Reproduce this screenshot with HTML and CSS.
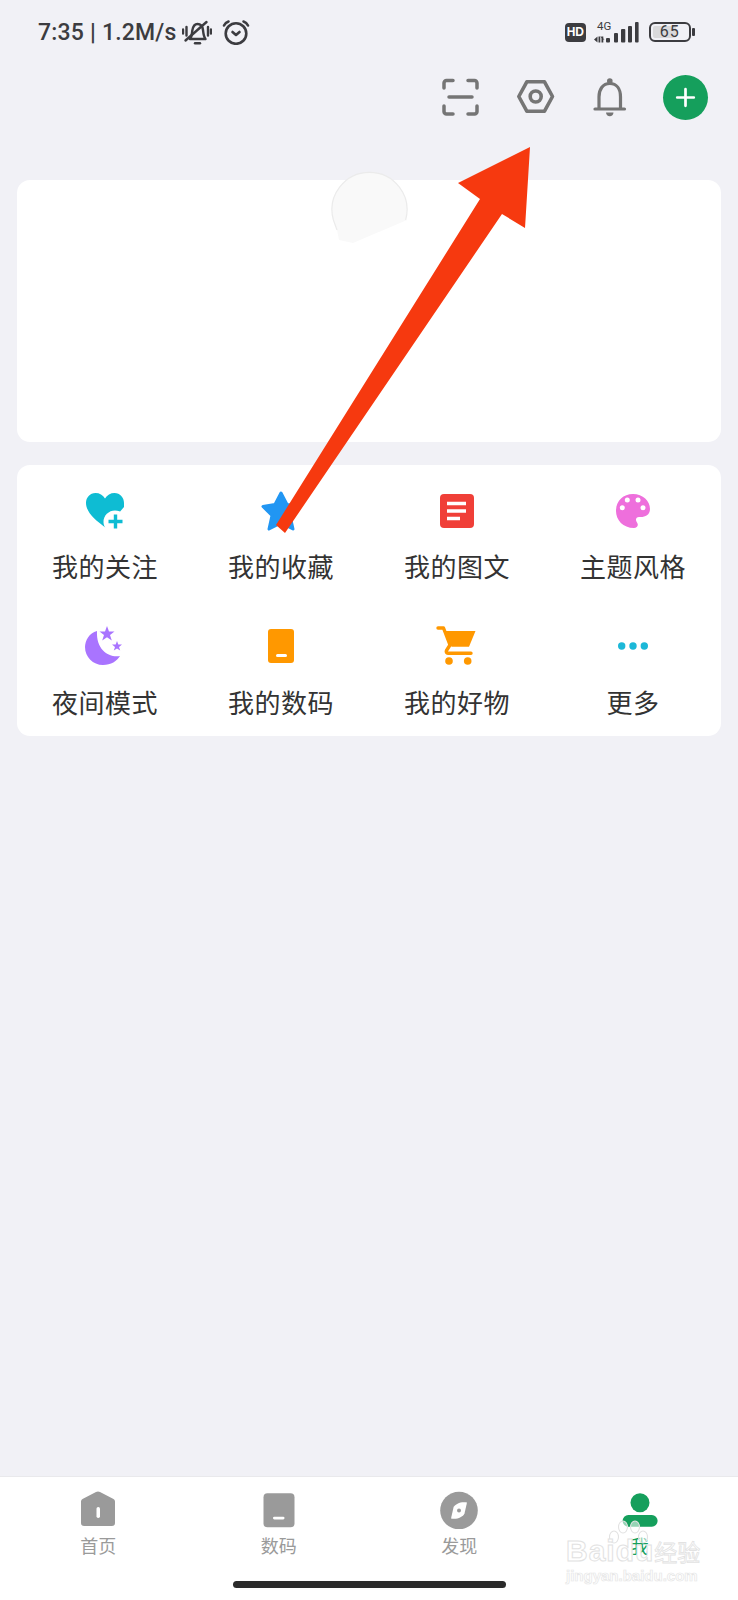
FILE: index.html
```html
<!DOCTYPE html>
<html lang="zh-CN">
<head>
<meta charset="utf-8">
<title>我的</title>
<link rel="stylesheet" href="styles.css">
</head>
<body>
<div class="page">
  <div class="status">
    <div class="status-left">
      <span class="status-text">7:35 <b class="bar">|</b> 1.2M/s</span>
      <svg class="ic-mute" viewBox="0 0 30 26"><g fill="none" stroke="#3c3c40" stroke-width="2.400" stroke-linecap="round" stroke-linejoin="round"><path d="M1 10.500v4M4.500 8v8.500M29 10.500v4M26 8v8.500"/><path d="M8 20c2-2 1.800-5 2.300-8.500C11 7.500 12.800 5 15.500 5c3 0 5 2.300 5.500 6 .4 3.500.5 6.500 2.500 9z"/><path d="M3.500 21.500L24.500 3"/><path d="M13 24.300h5"/></g></svg>
      <svg class="ic-alarm" viewBox="0 0 28 26"><g fill="none" stroke="#3c3c40" stroke-width="2.600" stroke-linecap="round" stroke-linejoin="round"><circle cx="14" cy="14.500" r="10.300"/><path d="M2 6.500c1-2 2.500-3.300 4.500-4M26 6.500c-1-2-2.500-3.300-4.500-4"/><path d="M10.500 13l3.500 3 3.500-3"/></g></svg>
    </div>
    <div class="status-right">
      <span class="hd">HD</span>
      <svg class="ic-signal" viewBox="0 0 46 24"><text x="3" y="9.500" class="net">4G</text><g fill="#3c3c40"><path d="M0 19.500l3.500-3v6zM4.500 16.500h1.800v6H4.500zM7.500 16.500h1.800v6H7.500zM6.500 16l4 3.500H8z"/><rect x="12" y="18" width="4" height="4.500" rx="1"/><rect x="20" y="13" width="4" height="9.500" rx="1"/><rect x="27" y="9" width="4.300" height="13.500" rx="1"/><rect x="34" y="6" width="4" height="16.500" rx="1"/><rect x="41" y="2" width="3.600" height="20.500" rx="1"/></g></svg>
      <div class="battery"><div class="battery-body"><span class="battery-fill"></span><span class="battery-num">65</span></div><span class="battery-nub"></span></div>
    </div>
  </div>

  <div class="actions">
    <svg class="act" viewBox="0 0 45 45"><g fill="none" stroke="#757575" stroke-width="3.500" stroke-linecap="round" stroke-linejoin="round"><path d="M6 13V8a2.500 2.500 0 0 1 2.500-2.500H15M30 5.500h6.500A2.500 2.500 0 0 1 39 8v5M39 31v5.500a2.500 2.500 0 0 1-2.500 2.500H30M15 39H8.500A2.500 2.500 0 0 1 6 36.500V31"/><path d="M11 22h23"/></g></svg>
    <svg class="act" viewBox="0 0 45 45"><g fill="none" stroke="#757575" stroke-width="3.600" stroke-linejoin="round"><path d="M5.800 21.500L13.800 6.800h17.700L39.500 21.500 31.500 36.200H13.800z"/><circle cx="22.700" cy="21.500" r="5.500"/></g></svg>
    <svg class="act" viewBox="0 0 45 45"><g fill="none" stroke="#757575" stroke-width="3.200" stroke-linecap="round"><path d="M11 33V22C11 14 15 8.500 21.800 8.500S32.500 14 32.500 22V33"/><path d="M7 34h29.500"/></g><circle cx="21.800" cy="6" r="2.800" fill="#757575"/><path d="M18 37.500h7.500c0 2.300-1.700 3.700-3.700 3.700S18 39.800 18 37.500z" fill="#757575"/></svg>
    <div class="add"><svg viewBox="0 0 45 45"><path d="M22.500 14.200v16.600M14.200 22.500h16.600" stroke="#fff" stroke-width="2.700" stroke-linecap="round"/></svg></div>
  </div>

  <div class="card profile"></div>

  <div class="card grid">
    <div class="item">
      <svg class="ico" viewBox="0 0 50 50"><path d="M25 13.500C23 10 19.500 8 15.500 8 10 8 6 12.500 6 18c0 9 9 17 20 25l18-21v-4c0-5.500-4-10-9.500-10-4 0-7.500 2-9.500 5.500z" fill="#0ebcd3"/><circle cx="35" cy="37" r="11.500" fill="#fff"/><path d="M35.500 29.500v14M28.500 36.500h14" stroke="#0ebcd3" stroke-width="3.400"/></svg>
      <span class="label">我的关注</span>
    </div>
    <div class="item">
      <svg class="ico" viewBox="0 0 50 50"><path d="M25 8l6 11.500 12 2-9 9 3 13.500-12-6-12 6 3-13.500-9-9 12-2z" fill="#2196f3" stroke="#2196f3" stroke-width="3" stroke-linejoin="round"/></svg>
      <span class="label">我的收藏</span>
    </div>
    <div class="item">
      <svg class="ico" viewBox="0 0 50 50"><rect x="8" y="9" width="34" height="34" rx="4" fill="#f03f38"/><path d="M15 18.500h19M15 26h19M15 33.500h13" stroke="#fff" stroke-width="3.400"/></svg>
      <span class="label">我的图文</span>
    </div>
    <div class="item">
      <svg class="ico" viewBox="0 0 50 50"><path d="M25 9c10 0 17 7 17 15 0 6-5 8-9 8h-2c-3 0-4 3-2 5.500 2 3 0 5.500-3 5.500-11 0-18-8-18-17C8 16 15 9 25 9z" fill="#ee6fdc"/><g fill="#fff"><circle cx="19.300" cy="15" r="2.500"/><circle cx="30" cy="15" r="2.500"/><circle cx="14.300" cy="22.700" r="2.500"/><circle cx="35" cy="22.700" r="2.500"/></g></svg>
      <span class="label">主题风格</span>
    </div>
    <div class="item">
      <svg class="ico" viewBox="0 0 50 50"><path d="M17 10C9 12 5 20 5 26c0 10 8 18 18 18 8 0 14-4 17-9-10 2-24-5-23-25z" fill="#a974ff"/><path d="M27 5l2 5.500h5.500L30 14l1.800 5.500L27 16.300 22.200 19.500 24 14l-4.500-3.500H25z" fill="#a974ff"/><path d="M37 20l1.300 3.500h3.700L39 26l1.200 3.500L37 27.400l-3.200 2.100L35 26l-3-2.500h3.700z" fill="#a974ff"/></svg>
      <span class="label">夜间模式</span>
    </div>
    <div class="item">
      <svg class="ico" viewBox="0 0 50 50"><rect x="12" y="8" width="26" height="34" rx="3" fill="#ff9800"/><rect x="20" y="33" width="11" height="3" rx="1.500" fill="#fff"/></svg>
      <span class="label">我的数码</span>
    </div>
    <div class="item">
      <svg class="ico" viewBox="0 0 50 50"><path d="M13 10h30.500l-6.500 15.700H19.500z" fill="#ff9800"/><g fill="none" stroke="#ff9800" stroke-width="3.400" stroke-linecap="round" stroke-linejoin="round"><path d="M6 7h5.500L18 24l-3.500 5.500c-.6 1.500 0 2.800 1.500 2.800h23"/></g><circle cx="17" cy="40" r="3.800" fill="#ff9800"/><circle cx="35.700" cy="40" r="3.800" fill="#ff9800"/></svg>
      <span class="label">我的好物</span>
    </div>
    <div class="item">
      <svg class="ico" viewBox="0 0 50 50"><g fill="#1cb8d8"><circle cx="13.700" cy="25" r="3.700"/><circle cx="25" cy="25" r="3.700"/><circle cx="36.300" cy="25" r="3.700"/></g></svg>
      <span class="label">更多</span>
    </div>
  </div>

  <div class="tabbar">
    <div class="tabs">
      <div class="tab">
        <svg class="tab-ico" viewBox="0 0 40 40"><path d="M3 12.500a3 3 0 0 1 1.500-2.500L18 3a4 4 0 0 1 4 0l13.500 7a3 3 0 0 1 1.500 2.500V34a3 3 0 0 1-3 3H6a3 3 0 0 1-3-3z" fill="#9a9a9a"/><rect x="18.500" y="18" width="3.500" height="11" rx="1.700" fill="#fff"/></svg>
        <span>首页</span>
      </div>
      <div class="tab">
        <svg class="tab-ico" viewBox="0 0 40 40"><rect x="4.500" y="4.300" width="31" height="34" rx="4" fill="#9a9a9a"/><rect x="14" y="27.700" width="11.500" height="2.700" rx="1.300" fill="#fff"/></svg>
        <span>数码</span>
      </div>
      <div class="tab">
        <svg class="tab-ico" viewBox="0 0 40 40"><circle cx="20" cy="21.500" r="18.800" fill="#9a9a9a"/><path d="M28 13.500c-6-1-11.500 1-13.500 5L12 29.500c6 1 11.500-1 13.500-5z" fill="#fff"/><circle cx="20" cy="21.500" r="2" fill="#9a9a9a"/></svg>
        <span>发现</span>
      </div>
      <div class="tab active">
        <svg class="tab-ico" viewBox="0 0 40 40"><circle cx="20" cy="13.700" r="9.500" fill="#159f5c"/><rect x="2.600" y="26" width="35" height="11.700" rx="5.800" fill="#159f5c"/></svg>
        <span>我</span>
      </div>
    </div>
    <div class="home-bar"></div>
  </div>

  <svg class="avatar" viewBox="0 0 84 84"><path d="M6.400 52A37.500 37.500 0 1 1 78.600 52L80 52 26 75 12 72 10 62z" fill="#f9f9f9"/><path d="M10 62L6.400 52A37.500 37.500 0 1 1 78.600 52" fill="none" stroke="#ebebeb" stroke-width="1.200"/></svg>

  <svg class="arrow" viewBox="0 0 738 1600"><path d="M530 147L525 228 502 214 285 533 276 525 480 199 458 183z" fill="#f6390f"/></svg>

  <div class="watermark">
    <svg class="paw" viewBox="0 0 40 30"><g fill="#fff" fill-opacity=".55" stroke="#e2e2e2" stroke-width="1.100"><ellipse cx="6" cy="17" rx="4.500" ry="6"/><ellipse cx="15" cy="7" rx="4.500" ry="6"/><ellipse cx="27" cy="7" rx="4.500" ry="6"/><ellipse cx="35" cy="17" rx="4.500" ry="6"/></g></svg>
    <div class="wm-main"><span class="wm-bai">Baidu</span><span class="wm-jy">经验</span></div>
    <div class="wm-url">jingyan.baidu.com</div>
  </div>
</div>
</body>
</html>
```
FILE: styles.css
```css
* { box-sizing: border-box; }
html, body { margin: 0; padding: 0; }
body { background: #f1f1f6; font-family: "Noto Sans CJK SC", "Noto Sans", sans-serif; }
.page { position: relative; width: 738px; height: 1600px; display: flex; flex-direction: column; overflow: hidden; }

.status { height: 64px; padding: 0 43px 0 38px; display: flex; align-items: center; justify-content: space-between; flex: none; }
.status-left { display: flex; align-items: center; width: 220px; }
.status-text { width: 144px; flex: none; font-family: Roboto, sans-serif; font-weight: 500; font-size: 23px; color: #3c3c40; letter-spacing: .2px; white-space: nowrap; }
.bar { font-weight: 700; }
.ic-mute { width: 30px; height: 26px; flex: none; }
.ic-alarm { width: 28px; height: 26px; margin-left: 10px; flex: none; }
.status-right { display: flex; align-items: center; }
.hd { width: 21px; height: 19px; border-radius: 4px; background: #3c3c40; color: #fff; font: 700 12px/19px "Liberation Sans", sans-serif; text-align: center; }
.ic-signal { width: 46px; height: 24px; margin-left: 8px; }
.net { font: 11.500px Roboto, sans-serif; fill: #3c3c40; }
.battery { display: flex; align-items: center; margin-left: 9px; }
.battery-body { position: relative; width: 42px; height: 20px; border: 2px solid #3c3c40; border-radius: 6px; display: flex; align-items: center; justify-content: center; overflow: hidden; }
.battery-fill { position: absolute; left: 2px; top: 2px; bottom: 2px; width: 23px; background: #d9d9db; border-radius: 2px; }
.battery-num { position: relative; font: 16px/16px Roboto, sans-serif; color: #3c3c40; letter-spacing: 1px; }
.battery-nub { width: 2.700px; height: 8px; margin-left: 1.500px; background: #3c3c40; border-radius: 1px; }

.actions { display: flex; justify-content: flex-end; gap: 30px; padding-right: 30px; margin-top: 11px; flex: none; }
.act { width: 45px; height: 45px; }
.add { width: 45px; height: 45px; border-radius: 50%; background: #159f5c; }
.add svg { display: block; width: 45px; height: 45px; }

.card { background: #fff; border-radius: 13px; margin: 0 17px; flex: none; }
.profile { height: 262px; margin-top: 60px; }
.grid { margin-top: 23px; height: 271px; padding-top: 20px; display: grid; grid-template-columns: repeat(4, 1fr); grid-auto-rows: 101px; row-gap: 35px; }
.item { display: flex; flex-direction: column; align-items: center; }
.ico { width: 50px; height: 50px; flex: none; }
.label { margin-top: 13px; font-size: 26px; line-height: 36px; color: #333; white-space: nowrap; letter-spacing: .5px; }

.tabbar { margin-top: auto; height: 124px; background: #fff; border-top: 1px solid #e9e9ec; padding-top: 12px; flex: none; }
.tabs { display: grid; grid-template-columns: repeat(4, 1fr); padding: 0 8px; }
.tab { display: flex; flex-direction: column; align-items: center; font-size: 18px; line-height: 24px; color: #9a9a9a; }
.tab-ico { width: 40px; height: 40px; margin-bottom: 4px; }
.active { color: #159f5c; }
.home-bar { width: 273px; height: 7px; border-radius: 4px; background: #2b2b2b; margin: 24px auto 0; }

.avatar { position: absolute; left: 327px; top: 168px; width: 84px; height: 84px; }
.arrow { position: absolute; left: 0; top: 0; width: 738px; height: 1600px; }

.watermark { position: absolute; left: 566px; top: 1520px; width: 132px; }
.paw { position: absolute; left: 42px; top: 0; width: 40px; height: 30px; }
.wm-main { position: absolute; left: 0; top: 16px; display: flex; align-items: center; white-space: nowrap; font-size: 30px; line-height: 30px; }
.wm-bai { font-family: "Liberation Sans", sans-serif; font-weight: 700; color: #fff; -webkit-text-stroke: 1px #e2e2e2; letter-spacing: 1px; }
.wm-jy { font-size: 23px; color: #fff; -webkit-text-stroke: .8px #e2e2e2; }
.wm-url { position: absolute; left: 0; top: 47px; font: 700 15px/18px "Liberation Sans", sans-serif; color: #fff; -webkit-text-stroke: .7px #e6e6e6; white-space: nowrap; }
```
